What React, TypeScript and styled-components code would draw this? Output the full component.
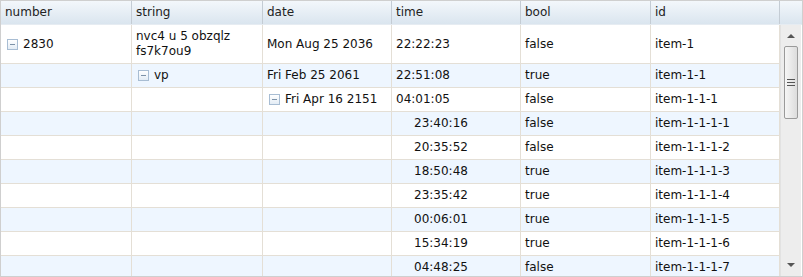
import React from "react";
import styled, { createGlobalStyle } from "styled-components";

const GlobalStyle = createGlobalStyle`
  html, body {
    margin: 0;
    padding: 0;
    background: #fff;
  }
  body {
    font-family: "DejaVu Sans", Verdana, sans-serif;
    font-size: 12px;
    color: #111;
  }
`;

const COLS = [131, 131, 129, 129, 130, 129];

const Grid = styled.div`
  width: 803px;
  height: 277px;
  box-sizing: border-box;
  border: 1px solid #cfcfcf;
  display: flex;
  flex-direction: column;
  overflow: hidden;
`;

const HeaderRow = styled.div`
  display: flex;
  height: 24px;
  flex-shrink: 0;
  background: linear-gradient(#f3f7fb, #dae5ef);
  border-bottom: 1px solid #e6ecf2;
  box-sizing: border-box;
`;

const HeaderCell = styled.div<{ $w: number }>`
  width: ${(p) => p.$w}px;
  flex-shrink: 0;
  box-sizing: border-box;
  padding: 0 4px;
  line-height: 23px;
  border-right: 1px solid #c4ccd4;
  color: #222;
`;

const HeaderFiller = styled.div`
  flex: 1;
`;

const Body = styled.div`
  flex: 1;
  display: flex;
  min-height: 0;
`;

const Rows = styled.div`
  width: 779px;
  overflow: hidden;
`;

const Row = styled.div<{ $alt: boolean }>`
  display: flex;
  background: ${(p) => (p.$alt ? "#eef6ff" : "#fff")};
  border-bottom: 1px solid #e4dfd6;
`;

const Cell = styled.div<{ $w: number; $indent?: number }>`
  width: ${(p) => p.$w}px;
  flex-shrink: 0;
  box-sizing: border-box;
  padding: 4px 4px 4px ${(p) => 4 + (p.$indent || 0)}px;
  line-height: 15px;
  border-right: 1px solid #e4dfd6;
  display: flex;
  align-items: center;
  gap: 5px;
`;

const Toggle = styled.span`
  width: 11px;
  height: 11px;
  box-sizing: border-box;
  flex-shrink: 0;
  border: 1px solid #a8bdd3;
  background: linear-gradient(#ffffff, #e3ecf5);
  position: relative;
  margin-left: 2px;
  &::after {
    content: "";
    position: absolute;
    left: 2px;
    right: 2px;
    top: 4px;
    height: 1px;
    background: #7d92a8;
  }
`;

const Scrollbar = styled.div`
  width: 21px;
  background: #ededed;
  border-left: 1px solid #e2e2e2;
  box-sizing: border-box;
  display: flex;
  flex-direction: column;
  align-items: center;
  padding: 2px 1px;
`;

const Arrow = styled.div<{ $down?: boolean }>`
  width: 0;
  height: 0;
  margin: 7px 0;
  border-left: 4px solid transparent;
  border-right: 4px solid transparent;
  ${(p) =>
    p.$down
      ? "border-top: 4px solid #555;"
      : "border-bottom: 4px solid #555;"}
`;

const Thumb = styled.div`
  width: 14px;
  height: 73px;
  margin-top: 1px;
  box-sizing: border-box;
  border: 1px solid #9a9a9a;
  border-radius: 2px;
  background: linear-gradient(90deg, #f6f6f6, #dcdcdc);
  display: flex;
  flex-direction: column;
  align-items: center;
  justify-content: center;
  gap: 2px;
`;

const Grip = styled.span`
  width: 8px;
  height: 1px;
  background: #555;
`;

const Track = styled.div`
  flex: 1;
`;

type TreeRow = {
  cells: (string | null)[];
  toggleAt?: number;
  leafIndent?: number;
};

const headers = ["number", "string", "date", "time", "bool", "id"];

const rows: TreeRow[] = [
  {
    cells: ["2830", "nvc4 u 5 obzqlz fs7k7ou9", "Mon Aug 25 2036", "22:22:23", "false", "item-1"],
    toggleAt: 0,
  },
  { cells: [null, "vp", "Fri Feb 25 2061", "22:51:08", "true", "item-1-1"], toggleAt: 1 },
  { cells: [null, null, "Fri Apr 16 2151", "04:01:05", "false", "item-1-1-1"], toggleAt: 2 },
  { cells: [null, null, null, "23:40:16", "false", "item-1-1-1-1"], leafIndent: 3 },
  { cells: [null, null, null, "20:35:52", "false", "item-1-1-1-2"], leafIndent: 3 },
  { cells: [null, null, null, "18:50:48", "true", "item-1-1-1-3"], leafIndent: 3 },
  { cells: [null, null, null, "23:35:42", "true", "item-1-1-1-4"], leafIndent: 3 },
  { cells: [null, null, null, "00:06:01", "true", "item-1-1-1-5"], leafIndent: 3 },
  { cells: [null, null, null, "15:34:19", "true", "item-1-1-1-6"], leafIndent: 3 },
  { cells: [null, null, null, "04:48:25", "false", "item-1-1-1-7"], leafIndent: 3 },
];

export default function App() {
  return (
    <>
      <GlobalStyle />
      <Grid>
        <HeaderRow>
          {headers.map((h, i) => (
            <HeaderCell key={h} $w={COLS[i]}>
              {h}
            </HeaderCell>
          ))}
          <HeaderFiller />
        </HeaderRow>
        <Body>
          <Rows>
            {rows.map((r, ri) => (
              <Row key={ri} $alt={ri % 2 === 1}>
                {r.cells.map((c, ci) => (
                  <Cell key={ci} $w={COLS[ci]} $indent={r.leafIndent === ci ? 18 : 0}>
                    {r.toggleAt === ci && <Toggle />}
                    {c !== null && <span>{c}</span>}
                  </Cell>
                ))}
              </Row>
            ))}
          </Rows>
          <Scrollbar>
            <Arrow />
            <Thumb>
              <Grip />
              <Grip />
              <Grip />
            </Thumb>
            <Track />
            <Arrow $down />
          </Scrollbar>
        </Body>
      </Grid>
    </>
  );
}
